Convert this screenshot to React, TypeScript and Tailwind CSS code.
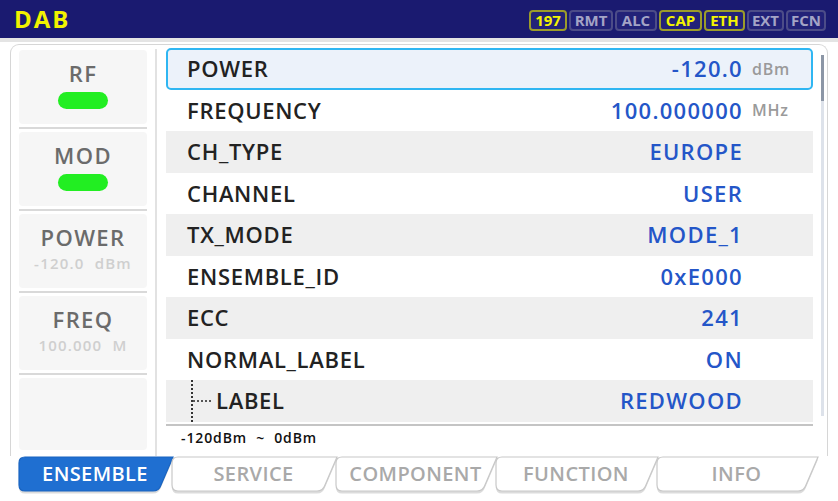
import React from "react";

const FONT = { fontFamily: '"Open Sans", "Noto Sans", "DejaVu Sans", sans-serif' };

type Badge = { t: string; on: boolean; w: number };
const badges: Badge[] = [
  { t: "197", on: true, w: 38 },
  { t: "RMT", on: false, w: 44 },
  { t: "ALC", on: false, w: 42 },
  { t: "CAP", on: true, w: 43 },
  { t: "ETH", on: true, w: 41 },
  { t: "EXT", on: false, w: 37 },
  { t: "FCN", on: false, w: 40 },
];

type Row = { label: string; value: string; unit?: string; child?: boolean };
const rows: Row[] = [
  { label: "POWER", value: "-120.0", unit: "dBm" },
  { label: "FREQUENCY", value: "100.000000", unit: "MHz" },
  { label: "CH_TYPE", value: "EUROPE" },
  { label: "CHANNEL", value: "USER" },
  { label: "TX_MODE", value: "MODE_1" },
  { label: "ENSEMBLE_ID", value: "0xE000" },
  { label: "ECC", value: "241" },
  { label: "NORMAL_LABEL", value: "ON" },
  { label: "LABEL", value: "REDWOOD", child: true },
];

const tabs = [
  { t: "ENSEMBLE", w: 156, active: true },
  { t: "SERVICE", w: 167, active: false },
  { t: "COMPONENT", w: 163, active: false },
  { t: "FUNCTION", w: 164, active: false },
  { t: "INFO", w: 163, active: false },
];

function Tab({ t, w, active }: { t: string; w: number; active: boolean }) {
  const h = 36;
  const s = 14;
  const r = 6;
  const d = `M ${r + 1} 1 L ${w - 1} 1 L ${w - 1 - s + 2} ${h - r - 1} Q ${w - 1 - s} ${h - 1} ${w - 1 - s - r} ${h - 1} L ${r + 1} ${h - 1} Q 1 ${h - 1} 1 ${h - r - 1} L 1 ${r + 1} Q 1 1 ${r + 1} 1 Z`;
  return (
    <div className="relative -mr-[3px] h-[39px] shrink-0" style={{ width: w }}>
      <svg className="absolute left-0 top-0" width={w} height={39} viewBox={`0 0 ${w} 39`}>
        <path d={d} transform="translate(0,2.5)" fill="#dcdcdc" stroke="none" />
        <path
          d={d}
          fill={active ? "#1f6fd1" : "#ffffff"}
          stroke={active ? "#1a64c0" : "#c8c8c8"}
          strokeWidth={1.2}
        />
      </svg>
      <div
        className={`relative flex h-[36px] items-center justify-center pr-[2px] text-[20px] font-semibold tracking-[0.4px] ${
          active ? "text-white" : "text-[#a9a9a9]"
        }`}
      >
        {t}
      </div>
    </div>
  );
}

function SideCell({ label, sub, pill }: { label?: string; sub?: string; pill?: boolean }) {
  return (
    <div className="flex h-[74px] flex-col items-center rounded-[4px] bg-[#f6f6f6]">
      {label && (
        <div className="mt-[8px] text-[22px] font-semibold leading-[30px] tracking-[1.4px] text-[#6b6b6b]">{label}</div>
      )}
      {pill && <div className="mt-[4px] h-[17px] w-[50px] rounded-full bg-[#22ee22]" />}
      {sub && (
        <div className="mt-[1px] whitespace-pre text-[15px] font-semibold leading-[20px] tracking-[1.2px] text-[#cfcfcf]">
          {sub}
        </div>
      )}
    </div>
  );
}

function Sep() {
  return <div className="my-[3px] h-[2px] bg-[#d9d9d9]" />;
}

export default function App() {
  return (
    <div className="flex h-[501px] w-[838px] flex-col overflow-hidden bg-white" style={FONT}>
      {/* header */}
      <div className="flex h-[38px] shrink-0 items-center justify-between bg-[#1a1a70] pl-[14px] pr-[12px]">
        <div className="text-[24px] font-bold leading-none tracking-[2px] text-[#f2f200]">DAB</div>
        <div className="flex gap-[2px] pt-[2px]">
          {badges.map((b) => (
            <div
              key={b.t}
              className={`flex h-[21px] items-center justify-center rounded-[4px] border-2 bg-[#222278] text-[15px] font-bold leading-none ${
                b.on ? "border-[#9c9c2a] text-[#f4f400]" : "border-[#4c4c88] text-[#a4a4c6]"
              }`}
              style={{ width: b.w }}
            >
              {b.t}
            </div>
          ))}
        </div>
      </div>
      <div className="h-[4px] shrink-0 bg-[#e4e4e4]" />

      {/* panel */}
      <div className="mx-[10px] mt-[2px] flex h-[412px] shrink-0 rounded-t-[9px] border border-b-0 border-[#d6d6d6]">
        {/* left column */}
        <div className="flex w-[138px] shrink-0 flex-col pl-[8px] pr-[2px] pt-[5px]">
          <SideCell label="RF" pill />
          <Sep />
          <SideCell label="MOD" pill />
          <Sep />
          <SideCell label="POWER" sub="-120.0  dBm" />
          <Sep />
          <SideCell label="FREQ" sub="100.000  M" />
          <Sep />
          <div className="mb-[6px] flex-1 rounded-[4px] bg-[#f6f6f6]" />
        </div>
        <div className="ml-[6px] mr-[9px] mt-[4px] w-[2px] bg-[#e2e2e2]" />

        {/* list */}
        <div className="flex w-[647px] shrink-0 flex-col pt-[3px]">
          {rows.map((r, i) => {
            const sel = i === 0;
            const bg = sel
              ? "bg-[#ecf2fa] border-2 border-[#2fb6f2] rounded-[5px]"
              : i % 2 === 0
              ? "bg-[#efefef]"
              : "bg-white";
            return (
              <div key={r.label} className={`flex h-[41.5px] shrink-0 items-center ${bg}`}>
                {r.child ? (
                  <div className="flex h-full items-center pl-[25px]">
                    <div className="h-full border-l-2 border-dotted border-[#333]" />
                    <div className="w-[18px] border-t-2 border-dotted border-[#555]" />
                    <div className="pl-[5px] text-[22px] font-semibold tracking-[0.7px] text-[#222]">{r.label}</div>
                  </div>
                ) : (
                  <div
                    className={`${sel ? "pl-[19px]" : "pl-[21px]"} text-[22px] font-semibold tracking-[0.7px] text-[#222]`}
                  >
                    {r.label}
                  </div>
                )}
                <div className="flex-1 text-right text-[22px] font-semibold tracking-[1.3px] text-[#2456c8]">
                  {r.value}
                </div>
                <div
                  className={`${sel ? "w-[68px]" : "w-[70px]"} pl-[9px] text-[16px] font-semibold tracking-[0.8px] text-[#9a9a9a]`}
                >
                  {r.unit ?? ""}
                </div>
              </div>
            );
          })}
          <div className="mt-[2px] h-[2px] bg-[#c4c4c4]" />
          <div className="whitespace-pre pl-[15px] pt-[3px] text-[14px] font-semibold leading-[18px] tracking-[0.9px] text-[#111]">
            {"-120dBm  ~  0dBm"}
          </div>
        </div>

        {/* scrollbar */}
        <div className="mb-[40px] ml-[8px] mt-[10px] flex w-[3px] flex-col bg-[#dde2ea]">
          <div className="h-[46px] bg-[#8c96a6]" />
        </div>
      </div>

      {/* tabs */}
      <div className="flex shrink-0 pl-[18px]">
        {tabs.map((t) => (
          <Tab key={t.t} {...t} />
        ))}
      </div>
    </div>
  );
}
